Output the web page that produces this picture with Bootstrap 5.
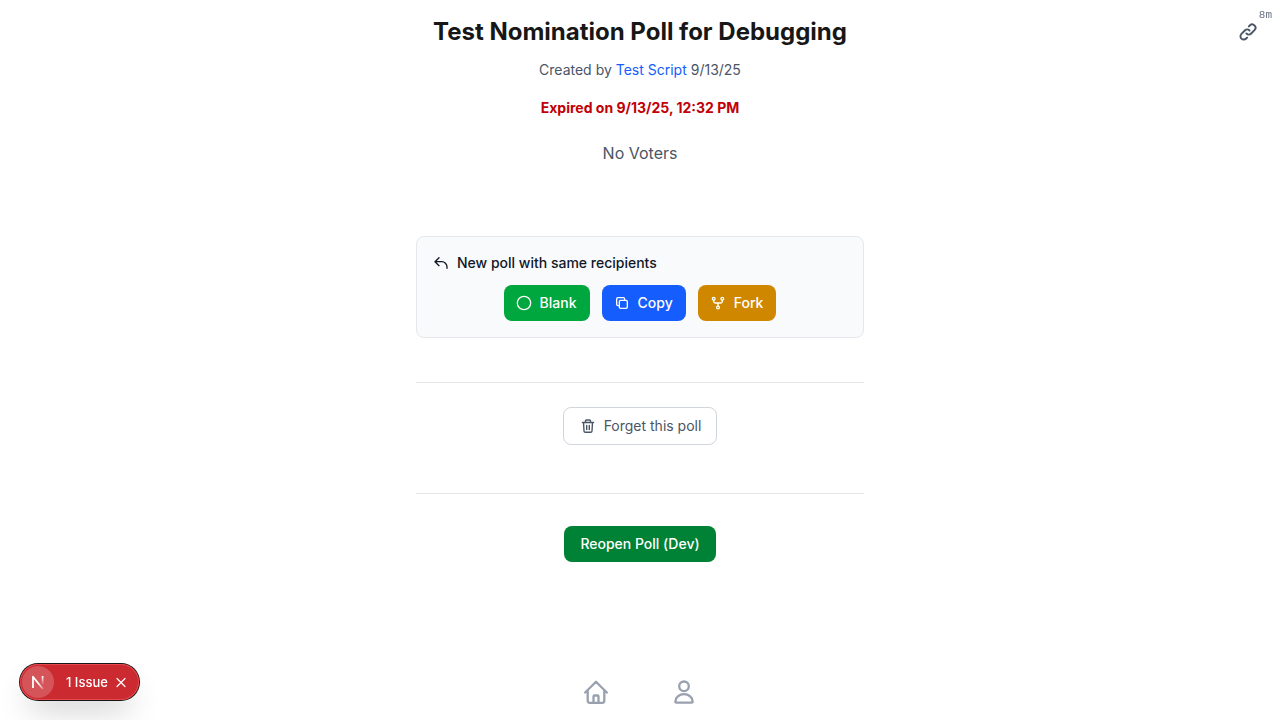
<!DOCTYPE html>
<html lang="en">
<head>
<meta charset="utf-8">
<meta name="viewport" content="width=device-width, initial-scale=1">
<title>Test Nomination Poll for Debugging</title>
<link href="https://cdn.jsdelivr.net/npm/bootstrap@5.3.0/dist/css/bootstrap.min.css" rel="stylesheet">
<script src="https://cdn.jsdelivr.net/npm/bootstrap@5.3.0/dist/js/bootstrap.bundle.min.js" defer></script>
<style>
  body { font-family: Inter, "Liberation Sans", sans-serif; font-size: 14px; line-height: 20px; color: #4a5565; background: #fff; }
  svg { fill: none; stroke: currentColor; stroke-linecap: round; stroke-linejoin: round; flex: none; }
  .poll-column { max-width: 448px; }
  .poll-title { font-size: 24px; line-height: 32px; font-weight: 700; color: #171717; margin-bottom: 12px; white-space: nowrap; }
  .poll-meta { margin-bottom: 18px; }
  .poll-meta a { color: #155dfc; }
  .poll-expired { color: #c10007; font-weight: 700; margin-bottom: 23px; }
  .poll-voters { font-size: 16px; line-height: 24px; margin-bottom: 71px; }
  .recipients { background: #f9fafb; border: 1px solid #e5e7eb; border-radius: 8px; margin-bottom: 44px; }
  .recipients h2 { font-size: 14px; line-height: 20px; font-weight: 500; color: #101828; margin-bottom: 12px; }
  .poll-actions { gap: 12px; }
  .btn { font-size: 14px; line-height: 20px; border-radius: 8px; --bs-btn-color: #fff; --bs-btn-border-width: 0; }
  .btn-poll { font-weight: 500; padding: 8px 13px 8px 12px; }
  .btn-blank { --bs-btn-bg: #00a63e; --bs-btn-hover-bg: #008236; --bs-btn-hover-color: #fff; }
  .btn-copy { --bs-btn-bg: #155dfc; --bs-btn-hover-bg: #1447e6; --bs-btn-hover-color: #fff; }
  .btn-fork { --bs-btn-bg: #d08700; --bs-btn-hover-bg: #a65f00; --bs-btn-hover-color: #fff; }
  .btn-forget { --bs-btn-color: #4a5565; --bs-btn-border-width: 1px; --bs-btn-border-color: #d1d5dc; --bs-btn-hover-bg: #f9fafb; padding: 8px 15px 8px 16px; }
  .btn-reopen { --bs-btn-bg: #008236; --bs-btn-hover-bg: #016630; --bs-btn-hover-color: #fff; font-weight: 500; padding: 8px 16px; }
  .section-line { border-top: 1px solid #e5e7eb; }
  .forget-section { padding: 24px 0 48px; }
  .reopen-section { padding-top: 32px; }
  .page-tools { color: #4a5565; padding: 8px 8px 0 0; }
  .page-age { font-family: "Liberation Mono", monospace; font-size: 11px; line-height: 14px; color: #6a7282; }
  .page-link-btn { color: #4a5565; padding: 0; margin-right: 14px; line-height: 1; }
  .tab-bar { gap: 64px; height: 56px; color: #99a1af; pointer-events: none; }
  .tab-bar a { color: #99a1af; line-height: 1; pointer-events: auto; }
  .issue-pill { left: 20px; bottom: 20px; height: 36px; padding: 2px; border-radius: 18px; background: #ca2a30; color: #fff; font-size: 13px; font-weight: 500; line-height: 20px;
    box-shadow: 0 0 0 1px #171717, inset 0 0 0 1px #e5484d, 0 16px 32px -8px rgba(0,0,0,.24); }
  .issue-pill button { border: 0; background: none; color: inherit; padding: 0; line-height: 1; }
  .issue-pill .issue-logo { width: 32px; height: 32px; border-radius: 50%; background: #d55459; }
  .issue-pill .issue-label { font-weight: 500; line-height: 20px; margin-left: 12px; }
  .issue-pill .issue-close { margin: 0 10px 0 7px; }
</style>
</head>
<body>
<main class="container-fluid poll-column min-vh-100 px-0 pt-3 text-center">
  <div class="d-flex flex-column align-items-center">
    <h1 class="poll-title">Test Nomination Poll for Debugging</h1>
    <p class="poll-meta">Created by <a href="#" class="text-decoration-none">Test Script</a> 9/13/25</p>
    <p class="poll-expired">Expired on 9/13/25, 12:32 PM</p>
    <p class="poll-voters">No Voters</p>
  </div>

  <section class="recipients p-3">
    <h2 class="d-flex align-items-center gap-2">
      <svg width="16" height="16" viewBox="0 0 24 24" stroke-width="2"><path d="M3 10h10a8 8 0 0 1 8 8v2M3 10l6 6m-6-6 6-6"/></svg>
      New poll with same recipients
    </h2>
    <div class="poll-actions d-flex justify-content-center">
      <button type="button" class="btn btn-poll btn-blank d-flex align-items-center gap-2"><svg width="16" height="16" viewBox="0 0 16 16" stroke-width="1.3"><circle cx="8" cy="8" r="6.7"/></svg>Blank</button>
      <button type="button" class="btn btn-poll btn-copy d-flex align-items-center gap-2"><svg width="16" height="16" viewBox="0 0 24 24" stroke-width="2"><path d="M8 16H6a2 2 0 0 1-2-2V6a2 2 0 0 1 2-2h8a2 2 0 0 1 2 2v2m-6 12h8a2 2 0 0 0 2-2v-8a2 2 0 0 0-2-2h-8a2 2 0 0 0-2 2v8a2 2 0 0 0 2 2z"/></svg>Copy</button>
      <button type="button" class="btn btn-poll btn-fork d-flex align-items-center gap-2"><svg width="16" height="16" viewBox="0 0 16 16" stroke-width="1.3"><circle cx="3.700" cy="3.700" r="1.4"/><circle cx="12.300" cy="3.700" r="1.4"/><circle cx="8" cy="12.500" r="1.4"/><path d="M3.700 5.100v1A1.900 1.900 0 0 0 5.600 8h4.800a1.900 1.900 0 0 0 1.900-1.900v-1M8 8v3.100"/></svg>Fork</button>
    </div>
  </section>

  <section class="section-line forget-section d-flex justify-content-center">
    <button type="button" class="btn btn-forget d-flex align-items-center gap-2"><svg width="16" height="16" viewBox="0 0 16 16" stroke-width="1.4"><path d="M2.500 4.500h11M5.500 4.500V3a1 1 0 0 1 1-1h3a1 1 0 0 1 1 1v1.500M3.500 4.500l.5 8.500a1.300 1.300 0 0 0 1.300 1.200h5.400A1.300 1.300 0 0 0 12 13l.5-8.500M6.700 7.500v4M9.300 7.500v4"/></svg>Forget this poll</button>
  </section>

  <section class="section-line reopen-section d-flex justify-content-center">
    <button type="button" class="btn btn-reopen">Reopen Poll (Dev)</button>
  </section>
</main>

<aside class="page-tools position-fixed top-0 end-0 d-flex flex-column align-items-end">
  <span class="page-age">8m</span>
  <button type="button" class="btn page-link-btn" aria-label="Copy link"><svg width="20" height="20" viewBox="0 0 24 24" stroke-width="2.300"><path d="M13.828 10.172a4 4 0 0 0-5.656 0l-4 4a4 4 0 1 0 5.656 5.656l1.102-1.101m-.758-4.899a4 4 0 0 0 5.656 0l4-4a4 4 0 0 0-5.656-5.656l-1.100 1.100"/></svg></button>
</aside>

<nav class="tab-bar fixed-bottom d-flex justify-content-center align-items-center" aria-label="Main">
  <a href="#" aria-label="Home"><svg width="24" height="24" viewBox="0 0 24 24" stroke-width="2.300"><path d="M1.200 12.500 12 1.800l10.800 10.700M3.700 10.500v10.300a2 2 0 0 0 2 2h12.600a2 2 0 0 0 2-2V10.500M9.500 22.500v-6a1 1 0 0 1 1-1h3a1 1 0 0 1 1 1v6"/></svg></a>
  <a href="#" aria-label="Profile"><svg width="24" height="24" viewBox="0 0 24 24" stroke-width="2.300"><circle cx="12" cy="6.300" r="4.800"/><path d="M4.300 22.700h15.400a1 1 0 0 0 1-1 8.700 7.500 0 0 0-17.400 0 1 1 0 0 0 1 1z"/></svg></a>
</nav>

<div class="issue-pill position-fixed z-3 d-flex align-items-center">
  <button type="button" class="issue-logo d-flex align-items-center justify-content-center" aria-label="Developer tools">
    <svg width="14" height="14" viewBox="0 0 14 14" stroke-width="1.8">
      <defs>
        <linearGradient id="fadeDiagonal" x1="7" y1="8" x2="14" y2="16" gradientUnits="userSpaceOnUse"><stop stop-color="#fff"/><stop offset="1" stop-color="#fff" stop-opacity="0"/></linearGradient>
        <linearGradient id="fadeStem" x1="0" y1="1" x2="0" y2="10" gradientUnits="userSpaceOnUse"><stop stop-color="#fff"/><stop offset="1" stop-color="#fff" stop-opacity="0"/></linearGradient>
      </defs>
      <path stroke-linecap="butt" d="M2 13V2"/><path stroke="url(#fadeDiagonal)" d="M2 1.800 11.500 13.500"/><path stroke="url(#fadeStem)" stroke-linecap="butt" d="M11.600 1v9h.01"/>
    </svg>
  </button>
  <button type="button" class="issue-label">1 Issue</button>
  <button type="button" class="issue-close" aria-label="Dismiss"><svg width="12" height="12" viewBox="0 0 12 12" stroke-width="1.200"><path d="m2 1.500 8 8m0-8-8 8"/></svg></button>
</div>
</body>
</html>
